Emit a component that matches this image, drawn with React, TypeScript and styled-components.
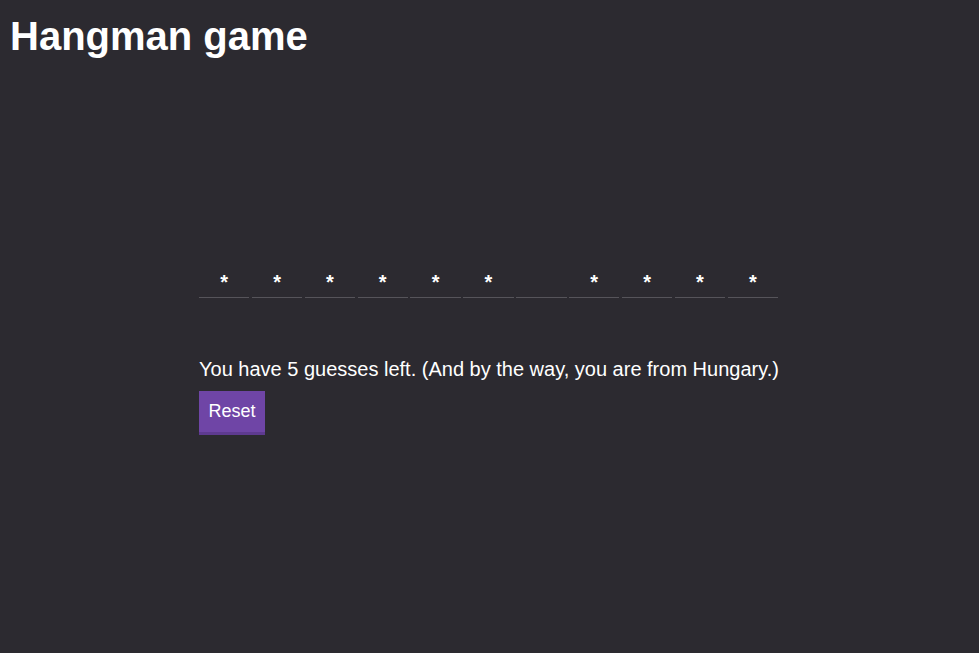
import { useState } from "react";
import styled, { createGlobalStyle } from "styled-components";

const GlobalStyle = createGlobalStyle`
  html, body {
    margin: 0;
    padding: 0;
    background: #2c2a30;
    color: #ffffff;
    font-family: "Liberation Sans", Arial, sans-serif;
  }
`;

const Page = styled.div`
  min-height: 653px;
  padding: 0 10px;
  box-sizing: border-box;
`;

const Title = styled.h1`
  margin: 0;
  padding-top: 13px;
  font-size: 40px;
  font-weight: bold;
  line-height: 46px;
`;

const Board = styled.div`
  width: 581px;
  margin: 207px auto 0;
`;

const Word = styled.div`
  display: flex;
  gap: 2.5px;
  width: 579px;
`;

const Cell = styled.div`
  flex: 1;
  height: 30px;
  border-bottom: 1px solid #56545a;
  display: flex;
  align-items: center;
  justify-content: center;
  font-size: 20px;
  font-weight: bold;
  line-height: 28px;
  padding-top: 1px;
`;

const Status = styled.p`
  margin: 59px 0 0;
  font-size: 20px;
  line-height: 24px;
`;

const ResetButton = styled.button`
  margin-top: 10px;
  height: 44px;
  padding: 0 9.5px;
  border: none;
  border-bottom: 3px solid #5e3a90;
  background: #6f45a6;
  color: #ffffff;
  font-family: "Liberation Sans", Arial, sans-serif;
  font-size: 18px;
  cursor: pointer;
`;

// masked word: two words, 6 and 4 letters
const WORD = "XXXXXX XXXX";

export default function App() {
  const [guesses, setGuesses] = useState(5);
  const letters = WORD.split("");

  return (
    <Page>
      <GlobalStyle />
      <Title>Hangman game</Title>
      <Board>
        <Word>
          {letters.map((ch, i) => (
            <Cell key={i}>{ch === " " ? "" : "*"}</Cell>
          ))}
        </Word>
        <Status>
          You have {guesses} guesses left. (And by the way, you are from Hungary.)
        </Status>
        <ResetButton onClick={() => setGuesses(5)}>Reset</ResetButton>
      </Board>
    </Page>
  );
}
